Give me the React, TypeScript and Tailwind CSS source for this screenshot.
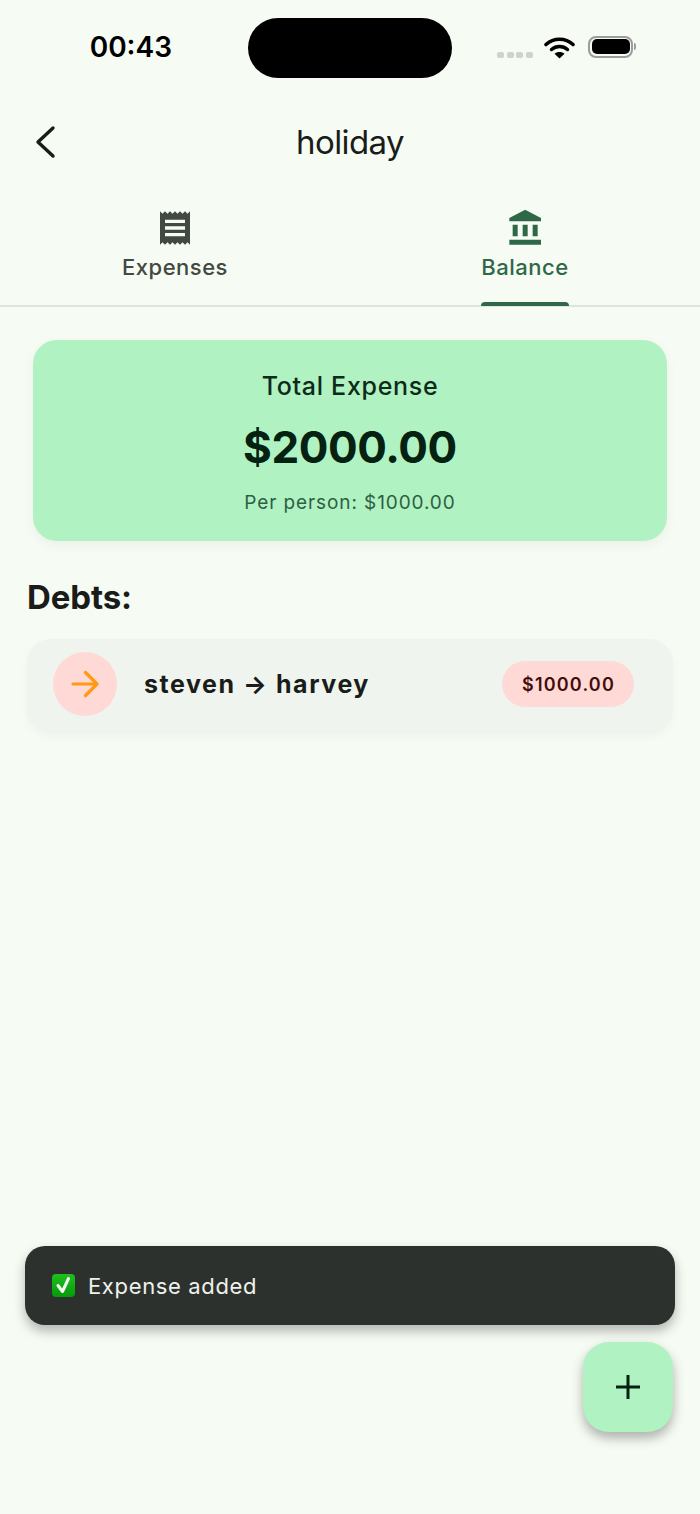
import React from "react";

const font = { fontFamily: "Inter, 'Liberation Sans', sans-serif" };

function StatusBar() {
  return (
    <div className="flex h-[96px] items-start">
      <div className="flex h-[94px] w-[248px] items-center justify-end pr-[76px] text-[28px] font-semibold leading-none text-black">
        00:43
      </div>
      <div className="mt-[18px] h-[60px] w-[204px] rounded-[30px] bg-black" />
      <div className="ml-[45px] flex h-[94px] items-center">
        <div className="mt-[16px] flex gap-[2.7px]">
          <span className="h-[6px] w-[7px] rounded-[2px] bg-[#cfd2cd]" />
          <span className="h-[6px] w-[7px] rounded-[2px] bg-[#cfd2cd]" />
          <span className="h-[6px] w-[7px] rounded-[2px] bg-[#cfd2cd]" />
          <span className="h-[6px] w-[7px] rounded-[2px] bg-[#cfd2cd]" />
        </div>
        <svg className="ml-[11px] -mt-[1px]" width="31" height="24" viewBox="0 0 31 24" fill="none">
          <path d="M2 9.5C9.5 2.5 21.5 2.5 29 9.5" stroke="black" strokeWidth="3.6" strokeLinecap="round" />
          <path d="M7.5 14.5C12 10.5 19 10.5 23.5 14.5" stroke="black" strokeWidth="3.4" strokeLinecap="round" />
          <path d="M15.5 23.5L10.5 18.8C13 16.5 18 16.5 20.5 18.8Z" fill="black" />
        </svg>
        <div className="ml-[13px] -mt-[1px] flex items-center">
          <div className="flex h-[22px] w-[45px] items-center justify-center rounded-[8px] border-2 border-[#9b9d9a]">
            <div className="h-[15px] w-[38px] rounded-[5px] bg-black" />
          </div>
          <div className="ml-[1px] h-[7px] w-[2px] rounded-r-[2px] bg-[#9b9d9a]" />
        </div>
      </div>
    </div>
  );
}

function Header() {
  return (
    <div className="relative flex h-[92px] items-center justify-center">
      <svg className="absolute left-[34px] top-[28px]" width="24" height="36" viewBox="0 0 24 36" fill="none">
        <path d="M19 4L4 18L19 32" stroke="#1a1c19" strokeWidth="3.4" strokeLinecap="round" strokeLinejoin="round" />
      </svg>
      <h1 className="text-[33px] font-normal leading-none tracking-[-0.6px] text-[#1a1c19]">holiday</h1>
    </div>
  );
}

function Tabs() {
  return (
    <div className="flex h-[119px] border-b-2 border-[#e0e4de]">
      <div className="flex w-1/2 flex-col items-center pt-[20px]">
        <svg width="40" height="40" viewBox="0 0 24 24" fill="#424842">
          <path d="M18 17H6v-2h12v2zm0-4H6v-2h12v2zm0-4H6V7h12v2zM3 22l1.5-1.5L6 22l1.5-1.5L9 22l1.5-1.5L12 22l1.5-1.5L15 22l1.5-1.5L18 22l1.5-1.5L21 22V2l-1.5 1.5L18 2l-1.5 1.5L15 2l-1.5 1.5L12 2l-1.5 1.5L9 2 7.5 3.5 6 2 4.5 3.5 3 2v20z" />
        </svg>
        <span className="mt-[5px] text-[22px] font-medium leading-[28px] tracking-[0.5px] text-[#424842]">Expenses</span>
      </div>
      <div className="relative flex w-1/2 flex-col items-center pt-[20px]">
        <svg width="40" height="40" viewBox="0 0 24 24" fill="#2f6847" className="ml-[1px]">
          <path d="M4 10v7h3v-7H4zm6 0v7h3v-7h-3zM2 22h19v-3H2v3zm14-12v7h3v-7h-3zm-4.5-9L2 6v2h19V6l-9.5-5z" />
        </svg>
        <span className="mt-[5px] text-[22px] font-medium leading-[28px] tracking-[0.55px] text-[#2f6847]">Balance</span>
        <div className="absolute bottom-[-1px] left-1/2 h-[4px] w-[88px] -translate-x-1/2 rounded-t-[4px] bg-[#2f6847]" />
      </div>
    </div>
  );
}

function TotalCard() {
  return (
    <div className="mx-[33px] mt-[33px] flex h-[201px] flex-col items-center rounded-[24px] bg-[#b0f2c2] pt-[31px] shadow-[0_4px_12px_rgba(0,40,10,0.05)]">
      <div className="text-[25px] font-medium leading-[30px] tracking-[0.7px] text-[#0f2a18]">Total Expense</div>
      <div className="mt-[20px] text-[44px] font-bold leading-[52px] tracking-[-0.4px] text-[#042111]">$2000.00</div>
      <div className="mt-[18px] text-[19px] font-normal leading-[24px] tracking-[0.9px] text-[#2f5f43]">Per person: $1000.00</div>
    </div>
  );
}

function DebtRow() {
  return (
    <div className="mx-[27px] mt-[21px] flex h-[94px] items-center rounded-[24px] bg-[#f0f4ee] pb-[4px] pl-[26px] pr-[39px] shadow-[0_4px_10px_rgba(0,40,10,0.03)]">
      <div className="flex h-[64px] w-[64px] items-center justify-center rounded-full bg-[#ffd9d5]">
        <svg width="28" height="28" viewBox="0 0 28 28" fill="none" className="-ml-[1px]">
          <path d="M2 14H26M14.5 2.5L26 14L14.5 25.5" stroke="#ff9a14" strokeWidth="3.2" strokeLinecap="round" strokeLinejoin="round" />
        </svg>
      </div>
      <div className="ml-[27px] flex-1 text-[25px] font-bold leading-none tracking-[1.55px] text-[#1a1c19]">steven → harvey</div>
      <div className="flex h-[46px] w-[132px] items-center justify-center rounded-full bg-[#ffd9d5] pl-[1px] text-[18px] font-semibold tracking-[1.2px] text-[#410e0b]">
        $1000.00
      </div>
    </div>
  );
}

function CheckEmoji() {
  return (
    <svg width="23" height="23" viewBox="0 0 23 23">
      <defs>
        <linearGradient id="emojiGreen" x1="0" y1="0" x2="0" y2="1">
          <stop offset="0" stopColor="#1fc01f" />
          <stop offset="1" stopColor="#059a0a" />
        </linearGradient>
      </defs>
      <rect x="0" y="0" width="23" height="23" rx="4" fill="url(#emojiGreen)" />
      <path d="M6 11.5L10.5 17.5L16.5 4.5" fill="none" stroke="#f4f8f3" strokeWidth="3" strokeLinecap="round" strokeLinejoin="round" />
    </svg>
  );
}

export default function App() {
  return (
    <div className="relative h-[1514px] w-[700px] overflow-hidden bg-[#f6fbf3]" style={font}>
      <StatusBar />
      <Header />
      <Tabs />
      <TotalCard />
      <h2 className="ml-[27px] mt-[35px] text-[33px] font-bold leading-[42px] tracking-[-0.1px] text-[#1a1c19]">Debts:</h2>
      <DebtRow />

      <div className="absolute left-[25px] top-[1246px] flex h-[79px] w-[650px] items-center gap-[13px] rounded-[20px] bg-[#2d312e] pl-[27px] shadow-[0_6px_12px_rgba(0,0,0,0.28)]">
        <CheckEmoji />
        <span className="text-[22px] font-normal leading-none tracking-[0.65px] text-[#eef2ec]">Expense added</span>
      </div>

      <button className="absolute left-[583px] top-[1342px] flex h-[90px] w-[90px] items-center justify-center rounded-[26px] bg-[#b0f2c2] shadow-[0_6px_12px_rgba(0,0,0,0.3)]">
        <svg width="26" height="26" viewBox="0 0 26 26" fill="none">
          <path d="M13 1V25M1 13H25" stroke="#042111" strokeWidth="3" />
        </svg>
      </button>
    </div>
  );
}
